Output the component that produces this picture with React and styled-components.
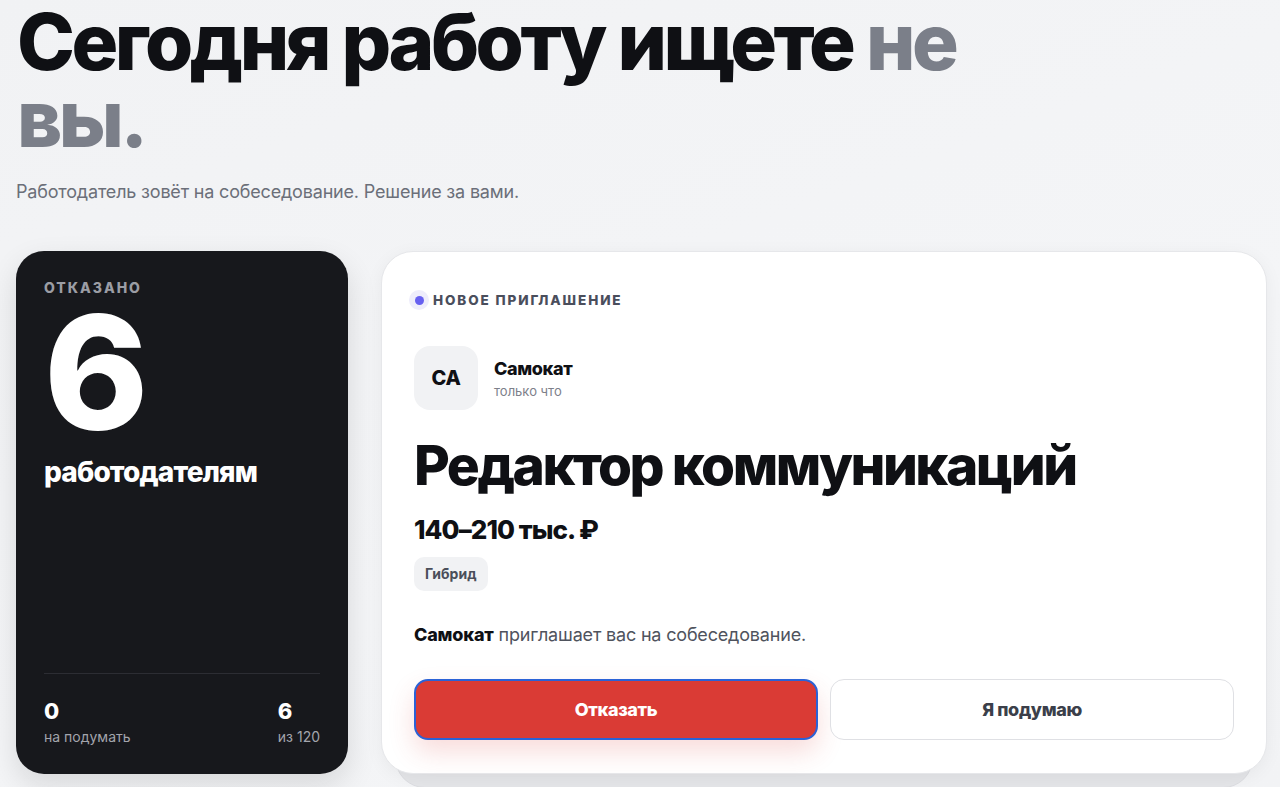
import React from 'react';
import styled, { createGlobalStyle } from 'styled-components';

const FONT = 'Inter, "Noto Sans", sans-serif';

const GlobalStyle = createGlobalStyle`
  html, body {
    margin: 0;
    padding: 0;
    height: 100%;
    overflow: hidden;
  }
  body {
    font-family: ${FONT};
    background: linear-gradient(160deg, #f1f2f4 0%, #f4f5f7 60%, #f2f3f5 100%);
    color: #0f1014;
  }
`;

const Page = styled.div`
  padding: 3px 13px 0 16px;
  display: flex;
  flex-direction: column;
`;

const Headline = styled.h1`
  margin: 0 0 0 1px;
  font-size: 78px;
  line-height: 77px;
  font-weight: 800;
  letter-spacing: -0.045em;
  color: #0f1014;
  max-width: 1000px;
`;

const Muted = styled.span`
  color: #7b7f89;
`;

const Lead = styled.p`
  margin: 24px 0 0;
  font-size: 18px;
  color: #6b6f79;
  letter-spacing: -0.01em;
`;

const Cards = styled.div`
  margin-top: 49px;
  display: grid;
  grid-template-columns: 332px 1fr;
  gap: 33px;
  align-items: start;
`;

const StatCard = styled.section`
  height: 523px;
  box-sizing: border-box;
  background: #17181c;
  border-radius: 28px;
  padding: 28px 28px 29px;
  color: #fff;
  display: flex;
  flex-direction: column;
  box-shadow: 0 12px 30px rgba(15, 16, 20, 0.12);
`;

const Eyebrow = styled.div`
  font-size: ${p => p.$size || 14}px;
  font-weight: 800;
  letter-spacing: 0.14em;
  color: ${p => p.$color || '#9b9da4'};
  text-transform: uppercase;
`;

const BigNumber = styled.div`
  font-size: 158px;
  line-height: 140px;
  font-weight: 800;
  letter-spacing: -0.04em;
  margin-top: 6px;
`;

const StatLabel = styled.div`
  font-size: 28px;
  font-weight: 800;
  letter-spacing: -0.03em;
  margin-top: 13px;
`;

const StatFooter = styled.div`
  margin-top: auto;
  border-top: 1px solid #2c2d33;
  padding-top: 24px;
  display: flex;
  justify-content: space-between;
`;

const Metric = styled.div`
  display: flex;
  flex-direction: column;
  align-items: ${p => (p.$right ? 'flex-end' : 'flex-start')};
  text-align: ${p => (p.$right ? 'right' : 'left')};
`;

const MetricValue = styled.div`
  font-size: 22px;
  font-weight: 800;
  line-height: 26px;
  align-self: flex-start;
`;

const MetricLabel = styled.div`
  font-size: 14px;
  color: #a3a5ac;
  margin-top: 4px;
`;

const Stack = styled.div`
  position: relative;

  &::before {
    content: '';
    position: absolute;
    left: 14px;
    right: 14px;
    bottom: -14px;
    height: 60px;
    background: #e4e5e8;
    border: 1px solid #dcdde1;
    border-radius: 0 0 30px 30px;
    z-index: 0;
  }
`;

const InviteCard = styled.section`
  position: relative;
  z-index: 1;
  height: 523px;
  box-sizing: border-box;
  background: #fff;
  border: 1px solid #e6e7ea;
  border-radius: 32px;
  padding: 38px 32px 33px 32px;
  display: flex;
  flex-direction: column;
  box-shadow: 0 4px 18px rgba(15, 16, 20, 0.05);
`;

const BadgeRow = styled.div`
  display: flex;
  align-items: center;
  gap: 4px;
  margin-left: -5px;
`;

const Dot = styled.span`
  width: 20px;
  height: 20px;
  border-radius: 50%;
  background: #eeedfb;
  display: flex;
  align-items: center;
  justify-content: center;

  &::after {
    content: '';
    width: 9px;
    height: 9px;
    border-radius: 50%;
    background: #6760f0;
  }
`;

const Company = styled.div`
  display: flex;
  align-items: center;
  gap: 16px;
  margin-top: 36px;
`;

const Avatar = styled.div`
  width: 64px;
  height: 64px;
  border-radius: 16px;
  background: #f1f2f4;
  display: flex;
  align-items: center;
  justify-content: center;
  font-size: 20px;
  font-weight: 800;
  letter-spacing: -0.01em;
`;

const CompanyInfo = styled.div`
  display: flex;
  flex-direction: column;
  gap: 4px;
`;

const CompanyName = styled.div`
  font-size: 18px;
  font-weight: 800;
  letter-spacing: -0.02em;
`;

const Time = styled.div`
  font-size: 13px;
  color: #7d808a;
`;

const JobTitle = styled.h2`
  margin: 22px 0 0;
  font-size: 55px;
  line-height: 66px;
  font-weight: 800;
  letter-spacing: -0.045em;
`;

const Salary = styled.div`
  font-size: 26px;
  font-weight: 800;
  letter-spacing: -0.035em;
  margin-top: 16px;
`;

const Tag = styled.span`
  align-self: flex-start;
  margin-top: 12px;
  padding: 8px 11px;
  line-height: 18px;
  border-radius: 10px;
  background: #f1f2f4;
  font-size: 14px;
  font-weight: 700;
  color: #4a4e5a;
`;

const Message = styled.p`
  margin: 33px 0 0;
  font-size: 18px;
  color: #4f535d;
  letter-spacing: -0.01em;

  strong {
    color: #0f1014;
    font-weight: 800;
  }
`;

const Actions = styled.div`
  margin-top: auto;
  display: grid;
  grid-template-columns: 1fr 1fr;
  gap: 12px;
`;

const Button = styled.button`
  height: 61px;
  border-radius: 14px;
  font-family: ${FONT};
  font-size: 18px;
  font-weight: 800;
  letter-spacing: -0.02em;
  cursor: pointer;
  border: ${p => (p.$primary ? '2px solid #2b62d6' : '1px solid #dfe0e4')};
  background: ${p => (p.$primary ? '#da3b35' : '#fff')};
  color: ${p => (p.$primary ? '#fff' : '#3b3f4a')};
  box-shadow: ${p => (p.$primary ? '0 12px 26px rgba(218, 59, 53, 0.18)' : 'none')};
`;

export default function App() {
  return (
    <>
      <GlobalStyle />
      <Page>
        <Headline>
          Сегодня работу ищете <Muted>не вы.</Muted>
        </Headline>
        <Lead>Работодатель зовёт на собеседование. Решение за вами.</Lead>

        <Cards>
          <StatCard>
            <Eyebrow>Отказано</Eyebrow>
            <BigNumber>6</BigNumber>
            <StatLabel>работодателям</StatLabel>
            <StatFooter>
              <Metric>
                <MetricValue>0</MetricValue>
                <MetricLabel>на подумать</MetricLabel>
              </Metric>
              <Metric $right>
                <MetricValue>6</MetricValue>
                <MetricLabel>из 120</MetricLabel>
              </Metric>
            </StatFooter>
          </StatCard>

          <Stack>
            <InviteCard>
              <BadgeRow>
                <Dot />
                <Eyebrow $color="#4a4e5c" $size={13.5}>Новое приглашение</Eyebrow>
              </BadgeRow>
              <Company>
                <Avatar>СА</Avatar>
                <CompanyInfo>
                  <CompanyName>Самокат</CompanyName>
                  <Time>только что</Time>
                </CompanyInfo>
              </Company>
              <JobTitle>Редактор коммуникаций</JobTitle>
              <Salary>140–210 тыс. ₽</Salary>
              <Tag>Гибрид</Tag>
              <Message>
                <strong>Самокат</strong> приглашает вас на собеседование.
              </Message>
              <Actions>
                <Button $primary>Отказать</Button>
                <Button>Я подумаю</Button>
              </Actions>
            </InviteCard>
          </Stack>
        </Cards>
      </Page>
    </>
  );
}
